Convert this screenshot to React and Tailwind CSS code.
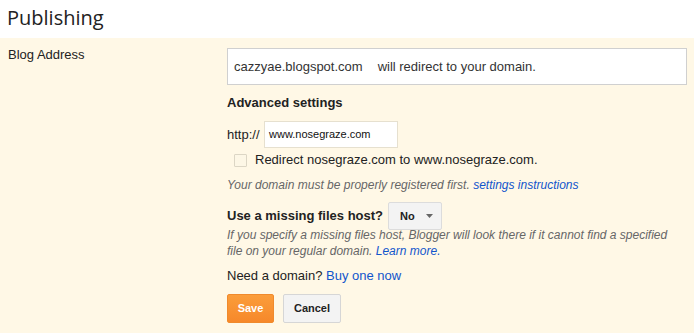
export default function App() {
  return (
    <div className="w-[694px] h-[333px] overflow-hidden bg-white font-['Liberation_Sans',Arial,sans-serif] text-[13px] text-[#222]">
      {/* Header */}
      <div className="h-[38px] pl-[7px] pt-[5px]">
        <h1 className="font-['Open_Sans',sans-serif] text-[20px] leading-[26px] text-[#222]">Publishing</h1>
      </div>

      {/* Settings panel */}
      <div className="h-[295px] bg-[#fff8e6] flex">
        <div className="w-[227px] shrink-0 pl-[8px] pt-[9px] leading-[16px]">Blog Address</div>

        <div className="flex-1 pt-[10px]">
          <div className="w-[460px] h-[37px] bg-white border border-[#d0d0d0] flex items-center pl-[6px] text-[13px] text-[#333]">
            <span>cazzyae.blogspot.com</span>
            <span className="ml-[15px]">will redirect to your domain.</span>
          </div>

          <div className="mt-[9px] font-bold text-[13px] leading-[17px]">Advanced settings</div>

          <div className="mt-[10px] flex items-center">
            <span className="text-[13px] w-[37px]">http://</span>
            <div className="w-[134px] h-[27px] bg-white border border-[#e6e0cf] flex items-center pl-[4px] text-[11px] text-[#111]">
              www.nosegraze.com
            </div>
          </div>

          <div className="mt-[4px] flex items-center pl-[7px]">
            <span className="w-[13px] h-[13px] border border-[#dcd6c5] bg-[#fdf7e6] rounded-[1px]"></span>
            <span className="ml-[8px] leading-[16px]">Redirect nosegraze.com to www.nosegraze.com.</span>
          </div>

          <div className="mt-[10px] italic text-[12px] text-[#666] leading-[15px]">
            Your domain must be properly registered first.{' '}
            <a className="text-[#15c]">settings instructions</a>
          </div>

          <div className="mt-[9px] flex items-center">
            <span className="font-bold text-[13px]">Use a missing files host?</span>
            <div className="ml-[5px] w-[54px] h-[28px] border border-[#dcdcdc] rounded-[2px] bg-[#f3f3f3] flex items-center pl-[11px] font-bold text-[11px] text-[#222]">
              No
              <svg className="ml-[11px]" width="7" height="4" viewBox="0 0 7 4">
                <path d="M0 0 H7 L3.5 4 Z" fill="#666" />
              </svg>
            </div>
          </div>

          <p className="-mt-[3px] italic text-[12px] text-[#666] leading-[16px] w-[450px]">
            If you specify a missing files host, Blogger will look there if it cannot find a specified file on your regular domain.{' '}
            <a className="text-[#15c]">Learn more.</a>
          </p>

          <div className="mt-[8px] leading-[17px]">
            Need a domain? <a className="text-[#15c]">Buy one now</a>
          </div>

          <div className="mt-[10px] flex gap-[9px]">
            <button className="w-[47px] h-[29px] rounded-[2px] bg-gradient-to-b from-[#fb9d3a] to-[#f6882a] border border-[#f08a2c] text-white font-bold text-[11px]">
              Save
            </button>
            <button className="w-[58px] h-[29px] rounded-[2px] bg-[#f3f3f3] border border-[#d6d6d6] text-[#222] font-bold text-[11px]">
              Cancel
            </button>
          </div>
        </div>
      </div>
    </div>
  );
}
